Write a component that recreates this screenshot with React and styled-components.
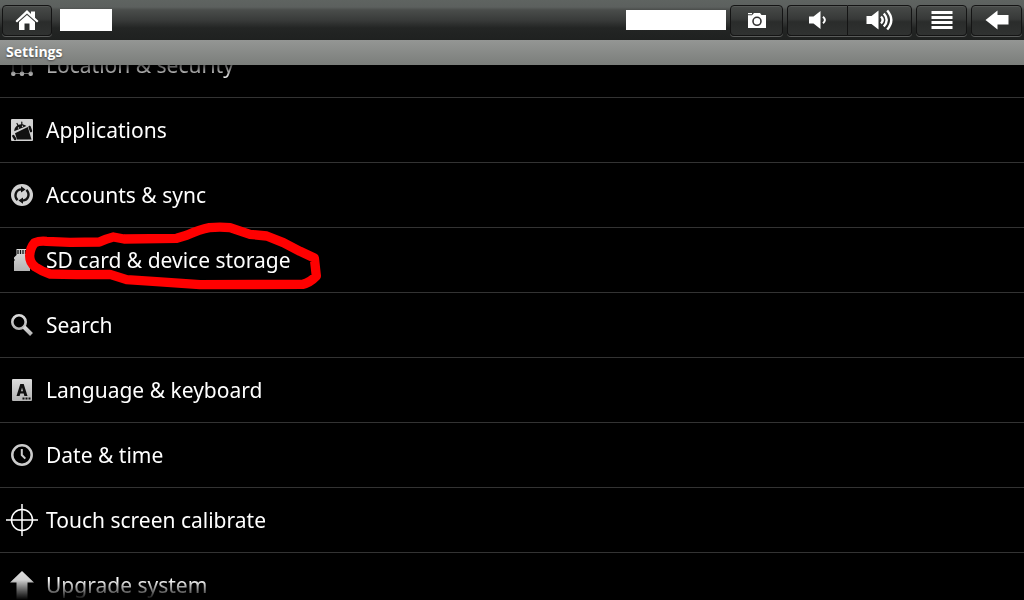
import React from 'react';
import styled, { createGlobalStyle } from 'styled-components';

const GlobalStyle = createGlobalStyle`
* {
box-sizing: border-box;
}
body {
margin: 0;
background: #000;
color: #fff;
font-family: 'Noto Sans', 'Open Sans', sans-serif;
}
`;

const HomeIcon = () => (
    <svg width="24" height="22" viewBox="0 0 24 22" fill="#fff" aria-hidden="true">
        <path d="M12 1 L0.5 12 L2 13.5 L12 4.5 L22 13.5 L23.5 12 L20 8.7 V2.5 H16 V5 Z" />
        <path d="M12 6 L4 13 V21 H9.5 V14.5 H14.5 V21 H20 V13 Z" />
    </svg>
);

const CameraIcon = () => (
    <svg width="20" height="16" viewBox="0 0 20 16" aria-hidden="true">
        <path fill="#fff" d="M1 3.2 H5 L7 1 H13 L14.5 3 H19 V16 H1 Z M1 1 H5 V2.2 H1 Z" />
        <circle cx="10" cy="9.3" r="4" fill="#fff" stroke="#333" strokeWidth="1.6" />
    </svg>
);

const VolumeDownIcon = () => (
    <svg width="20" height="20" viewBox="0 0 20 20" aria-hidden="true">
        <path fill="#fff" d="M1 6.5 H5.5 L12.5 1 V19 L5.5 13.5 H1 Z" />
        <path fill="none" stroke="#fff" strokeWidth="2" d="M15 6.8 Q18.8 10 15 13.2" />
    </svg>
);

const VolumeUpIcon = () => (
    <svg width="28" height="22" viewBox="0 0 28 22" aria-hidden="true">
        <path fill="#fff" d="M0.5 7 H5.5 L12.5 1.5 V20.5 L5.5 15 H0.5 Z" />
        <path
            fill="none"
            stroke="#fff"
            strokeWidth="2.4"
            d="M15 7.5 Q18.4 11 15 14.5 M17.8 4.5 Q23.6 11 17.8 17.5 M21.2 1.5 Q29.4 11 21.2 20.5"
        />
    </svg>
);

const MenuIcon = () => (
    <svg width="22" height="18" viewBox="0 0 22 18" fill="#fff" aria-hidden="true">
        <path d="M0.5 0 H21.5 V3 H0.5 Z M0.5 5 H21.5 V8 H0.5 Z M0.5 10 H21.5 V13 H0.5 Z M0.5 15 H21.5 V18 H0.5 Z" />
    </svg>
);

const BackIcon = () => (
    <svg width="24" height="20" viewBox="0 0 24 20" fill="#fff" aria-hidden="true">
        <path d="M0.5 10 L12.5 0.5 V5 H23.5 V14.5 H12.5 V19.5 Z" />
    </svg>
);

const icons = {
    location: (
        <g fill="#ddd">
            <path d="M7 14 V25 M16 14 V25 M25 14 V25 M7 24.5 H25" stroke="#999" fill="none" />
            <circle cx="7.3" cy="24.8" r="2.3" />
            <circle cx="16" cy="24.8" r="2.3" />
            <circle cx="24.7" cy="24.8" r="2.3" />
        </g>
    ),
    applications: (
        <g>
            <rect x="5" y="5" width="22" height="22" rx="1" fill="#d2d2d2" />
            <path d="M8.2 17.2 C8.2 11 15.5 8 20.4 12 Z" fill="#111" />
            <path d="M9 19.2 L21.8 13 L25.5 25.5 H11 Z" fill="#111" />
            <path
                d="M11 9.5 L12.4 12 M15.8 8 V11"
                stroke="#111"
                strokeWidth="1.2"
                strokeLinecap="round"
            />
            <path
                d="M7.3 22 L9.2 25 M23.6 13 L25 17"
                stroke="#111"
                strokeWidth="2.4"
                strokeLinecap="round"
            />
            <circle cx="12.5" cy="14" r="0.7" fill="#d2d2d2" />
            <circle cx="16.5" cy="12.3" r="0.7" fill="#d2d2d2" />
        </g>
    ),
    sync: (
        <g>
            <circle cx="16" cy="16" r="11" fill="#d2d2d2" />
            <path
                d="M11.6 21.2 C7.6 17 9.6 10.6 15.5 10.4 M20.4 10.8 C24.4 15 22.4 21.4 16.5 21.6"
                fill="none"
                stroke="#111"
                strokeWidth="2.4"
            />
            <path d="M15 7.2 L19.6 10.4 L15 13.6 Z M17 18.4 L12.4 21.6 L17 24.8 Z" fill="#111" />
        </g>
    ),
    storage: (
        <g>
            <path d="M10.5 5 H24 V27 H8 V17 L9 16 L8 15 V13.5 L10.5 11 Z" fill="url(#metal)" />
            <path d="M12 6 V10 M14.5 6 V10 M17 6 V10 M19.5 6 V10" stroke="#111" strokeWidth="1.3" />
        </g>
    ),
    search: (
        <g fill="none" stroke="url(#metal)">
            <circle cx="13" cy="13" r="6.7" strokeWidth="2.6" />
            <path d="M18 18 L25.5 25.5" strokeWidth="4" />
        </g>
    ),
    language: (
        <g>
            <rect x="6" y="5" width="20" height="22" rx="1" fill="url(#metal)" />
            <path
                d="M10.5 22 L14.3 10 H17.7 L21.5 22 H18.4 L17.7 19.6 H14.3 L13.6 22 Z M15 17.3 H17 L16 13.6 Z"
                fill="#111"
                fillRule="evenodd"
            />
            <path d="M16.5 24.5 H18.5 M19.5 24.5 H21.5 M22.5 24.5 H24.5" stroke="#111" strokeWidth="2" />
        </g>
    ),
    clock: (
        <g fill="none" stroke="#ccc">
            <circle cx="16" cy="16" r="9.7" strokeWidth="2.5" />
            <path d="M15.8 10 V16 L19.3 19.6" strokeWidth="2" />
        </g>
    ),
    calibrate: (
        <g fill="none" stroke="#fff" strokeWidth="1.5">
            <circle cx="16" cy="16" r="10.5" />
            <path d="M16 0 V32 M0 16 H32" />
        </g>
    ),
    upgrade: <path d="M16 2 L28 13.5 H21.5 V31 H10.5 V13.5 H4 Z" fill="url(#metal)" />
};

const settings = [
    { icon: 'location', text: 'Location & security' },
    { icon: 'applications', text: 'Applications' },
    { icon: 'sync', text: 'Accounts & sync' },
    { icon: 'storage', text: 'SD card & device storage', marked: true },
    { icon: 'search', text: 'Search' },
    { icon: 'language', text: 'Language & keyboard' },
    { icon: 'clock', text: 'Date & time' },
    { icon: 'calibrate', text: 'Touch screen calibrate' },
    { icon: 'upgrade', text: 'Upgrade system' }
];

const SettingIcon = ({ name }) => (
    <svg width="32" height="32" viewBox="0 0 32 32" aria-hidden="true">
        <defs>
            <linearGradient id="metal" x1="0" y1="0" x2="0" y2="1">
                <stop offset="0" stopColor="#dcdcdc" />
                <stop offset="1" stopColor="#b4b4b4" />
            </linearGradient>
        </defs>
        {icons[name]}
    </svg>
);

const Marker = () => (
    <MarkerSvg width="340" height="80" viewBox="0 0 1020 240" aria-hidden="true">
        <path
            d="M104 68 Q118 62 140 64 L210 67 L298 66 Q320 56 340 51 L372 57 L530 55 L560 46 Q600 28 628 23 Q660 20 690 23
            L750 43 L800 48 L850 68 L900 94 L943 114 L949 168 Q930 188 908 193 L600 194 L470 185 L380 179 L330 163
            L230 164 L150 162 Q125 154 106 141 Q89 128 89 108 Q90 84 104 68 Z"
        />
    </MarkerSvg>
);

const App = () => {
    return (
        <Page>
            <GlobalStyle />
            <TopBar>
                <BarButton $width={50} aria-label="Home"><HomeIcon /></BarButton>
                <Blank $width={52} $height={22} />
                <Spacer />
                <Blank $width={100} $height={20} />
                <BarButton $width={53} aria-label="Camera"><CameraIcon /></BarButton>
                <ButtonGroup>
                    <BarButton $width={60} $side="left" aria-label="Volume down"><VolumeDownIcon /></BarButton>
                    <BarButton $width={65} $side="right" aria-label="Volume up"><VolumeUpIcon /></BarButton>
                </ButtonGroup>
                <BarButton $width={51} aria-label="Menu"><MenuIcon /></BarButton>
                <BarButton $width={51} aria-label="Back"><BackIcon /></BarButton>
            </TopBar>
            <Title>Settings</Title>
            <Scroller>
                <List>
                    {settings.map(({ icon, text, marked }) => (
                        <Row key={icon}>
                            <RowLink href="#">
                                <SettingIcon name={icon} />
                                {text}
                            </RowLink>
                            {marked && <Marker />}
                        </Row>
                    ))}
                </List>
            </Scroller>
        </Page>
    );
};

const Page = styled.div`
display: flex;
flex-direction: column;
height: 100vh;
overflow: hidden;
`;

const TopBar = styled.header`
display: flex;
align-items: center;
flex: none;
gap: 4px;
height: 40px;
padding: 0 2px;
background: linear-gradient(#5f6461 0, #5c605e 7px, #4a4d4b 10px, #393b3a 20px, #232524 28px, #1f2120 40px);
`;

const BarButton = styled.button`
display: flex;
align-items: center;
justify-content: center;
width: ${props => props.$width}px;
height: 31px;
padding: 0;
border: 1px solid #141414;
border-right-width: ${props => props.$side === 'left' ? '0' : '1px'};
border-radius: ${props => props.$side === 'left' ? '4px 0 0 4px' : props.$side === 'right' ? '0 4px 4px 0' : '4px'};
background: linear-gradient(#484b49, #373938 45%, #2a2c2b 55%, #303231);
box-shadow: 0 1px 0 #5a5c5b, inset 0 1px 0 #555856;
`;

const ButtonGroup = styled.div`
display: flex;
`;

const Blank = styled.div`
width: ${props => props.$width}px;
height: ${props => props.$height}px;
margin-left: 4px;
background: #fff;
`;

const Spacer = styled.div`
flex: 1;
`;

const Title = styled.h1`
flex: none;
height: 25px;
margin: 0;
padding: 0 6px;
background: linear-gradient(#949694, #7b7e7b);
font-family: 'Open Sans', 'Noto Sans', sans-serif;
font-size: 14px;
line-height: 24px;
font-weight: 700;
text-shadow: 0 1px 2px #444;
`;

const Scroller = styled.main`
flex: 1;
min-height: 0;
overflow: hidden;
mask-image: linear-gradient(rgba(0, 0, 0, 0.3), #000 14px, #000 calc(100% - 20px), transparent);
`;

/* the list sits scrolled half a row down */
const List = styled.ul`
margin: -32px 0 0;
padding: 0;
list-style: none;
`;

const Row = styled.li`
position: relative;
border-bottom: 1px solid #333;
`;

const RowLink = styled.a`
display: flex;
align-items: center;
gap: 8px;
height: 64px;
padding: 0 6px;
color: #fff;
font-size: 21px;
line-height: 30px;
text-decoration: none;
`;

const MarkerSvg = styled.svg`
position: absolute;
top: -8px;
left: 0;
z-index: 1;
pointer-events: none;

path {
fill: none;
stroke: #f00;
stroke-width: 28;
stroke-linejoin: round;
}
`;

export default App;
